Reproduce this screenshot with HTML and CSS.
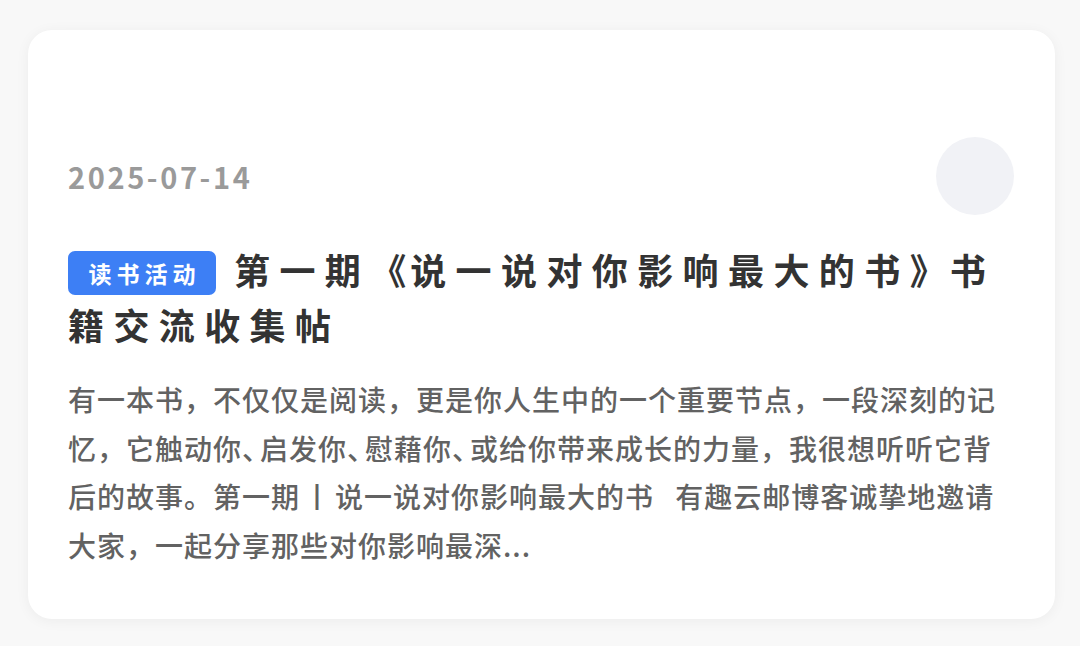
FILE: index.html
```html
<!DOCTYPE html>
<html lang="zh-CN">
<head>
<meta charset="utf-8">
<link rel="stylesheet" href="styles.css">
</head>
<body>
<div class="page">
  <article class="card">
    <div class="meta">
      <span class="date">2025-07-14</span>
      <span class="avatar"></span>
    </div>
    <h2 class="title"><span class="badge">读书活动</span>第一期<span class="bracket">《</span>说一说对你影响最大的书<span class="bracket">》</span>书籍交流收集帖</h2>
    <p class="summary">有一本书，不仅仅是阅读，更是你人生中的一个重要节点，一段深刻的记忆，它触动你<span class="dun">、</span>启发你<span class="dun">、</span>慰藉你<span class="dun">、</span>或给你带来成长的力量，我很想听听它背后的故事。第一期<span class="bar">丨</span>说一说对你影响最大的书 有趣云邮博客诚挚地邀请大家，一起分享那些对你影响最深...</p>
  </article>
</div>
</body>
</html>
```
FILE: styles.css
```css
html, body {
  margin: 0;
  padding: 0;
  background: #f8f8f8;
}
body {
  font-family: "Noto Sans CJK SC", "Noto Sans", sans-serif;
  width: 1080px;
  height: 646px;
  overflow: hidden;
}
.page {
  padding: 30px 25px 0 28px;
}
.card {
  background: #ffffff;
  border-radius: 24px;
  box-shadow: 0 2px 14px rgba(0, 0, 0, 0.05);
  padding: 107px 41px 49px 40px;
  height: 589px;
  box-sizing: border-box;
}
.meta {
  display: flex;
  justify-content: space-between;
  align-items: center;
  height: 78px;
}
.date {
  font-size: 29px;
  font-weight: 700;
  color: #9a9a9a;
  letter-spacing: 2.6px;
}
.avatar {
  width: 78px;
  height: 78px;
  border-radius: 50%;
  background: #f1f2f6;
}
.title {
  margin: 27px 0 0;
  font-size: 36px;
  font-weight: 700;
  line-height: 55px;
  color: #333333;
  letter-spacing: 9.4px;
}
.bracket {
  letter-spacing: 4px;
}
.badge {
  display: inline-block;
  vertical-align: 2px;
  background: #3d7ff5;
  color: #ffffff;
  font-size: 23px;
  font-weight: 700;
  line-height: 44px;
  height: 44px;
  width: 148px;
  box-sizing: border-box;
  text-align: center;
  letter-spacing: 5px;
  padding-left: 5px;
  border-radius: 7px;
  margin-right: 18px;
}
.summary {
  margin: 23px 0 0;
  font-size: 28px;
  font-weight: 500;
  line-height: 48.5px;
  color: #626262;
  letter-spacing: 1px;
  word-spacing: 14px;
}
.dun {
  font-feature-settings: "halt";
  padding-right: 3px;
}
.bar {
  padding: 0 3px;
}
```
